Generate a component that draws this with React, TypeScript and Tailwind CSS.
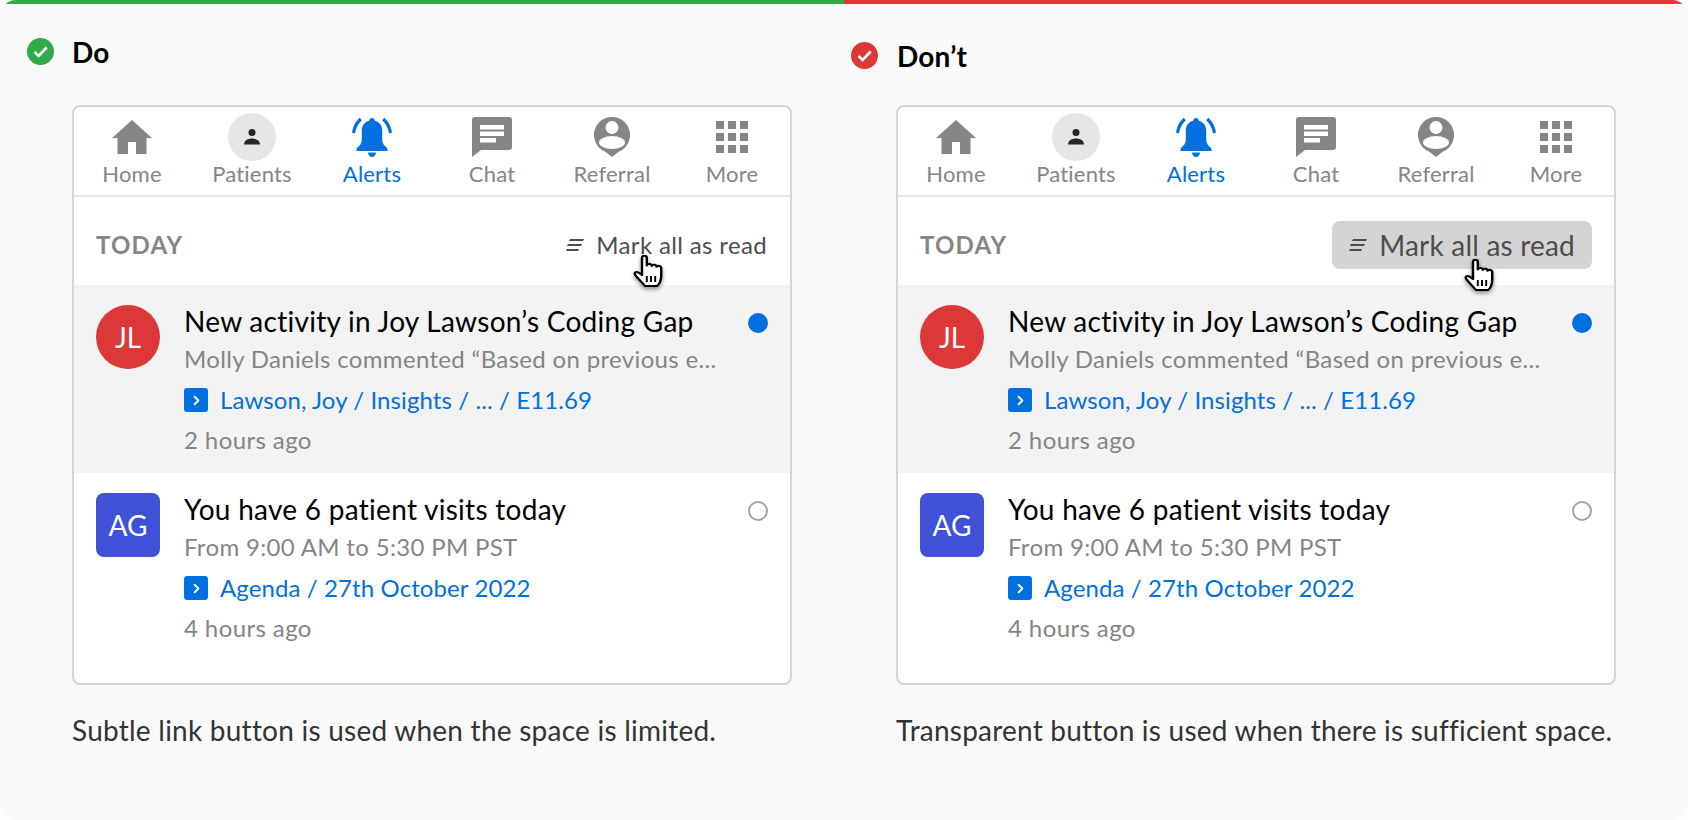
import { ChevronRight } from "lucide-react";

const TABS = ["Home", "Patients", "Alerts", "Chat", "Referral", "More"];

function HomeIcon() {
  return (
    <svg viewBox="0 0 40 34" className="h-[34px] w-[40px] fill-[#858585]">
      <path d="M20 0 40 18h-5.500v16H24V22h-8v12H5.500V18H0z" />
    </svg>
  );
}

function PatientIcon() {
  return (
    <div className="grid h-[48px] w-[48px] place-items-center rounded-full bg-[#e5e5e5]">
      <svg viewBox="0 0 18 18" className="h-[18px] w-[18px] fill-[#262626]">
        <circle cx="9" cy="4.500" r="3.500" />
        <path d="M1 16.500c0-4 3.800-6 8-6s8 2 8 6z" />
      </svg>
    </div>
  );
}

function BellIcon() {
  return (
    <svg viewBox="0 0 40 40" className="h-[40px] w-[40px] fill-[#0070e0]">
      <path d="M20 1c1.600 0 2.800 1.200 2.800 2.800 4.800 1.200 7.400 5 7.400 10.200v9c0 3.600 2.400 6 5.300 8.500V34h-31v-2.500c2.900-2.500 5.300-4.900 5.300-8.500v-9c0-5.200 2.600-9 7.400-10.200C17.200 2.200 18.400 1 20 1z" />
      <path d="M15.800 35.500h8.400c-.5 2.500-2.200 4.500-4.200 4.500s-3.700-2-4.200-4.500z" />
      <path d="M1.600 16C2.200 10.500 4.700 5.800 8.700 2" fill="none" stroke="#0070e0" strokeWidth="3.200" />
      <path d="M38.400 16C37.800 10.500 35.300 5.800 31.300 2" fill="none" stroke="#0070e0" strokeWidth="3.200" />
    </svg>
  );
}

function ChatIcon() {
  return (
    <svg viewBox="0 0 40 40" className="h-[40px] w-[40px]">
      <path className="fill-[#858585]" d="M3 0h34a3 3 0 0 1 3 3v27a3 3 0 0 1-3 3H9l-9 7V3a3 3 0 0 1 3-3z" />
      <path className="fill-white" d="M8 8h24v4.500H8zM8 14.500h24V19H8zM8 21h16v4.500H8z" />
    </svg>
  );
}

function ReferralIcon() {
  return (
    <svg viewBox="0 0 36 40" className="h-[40px] w-[36px]">
      <path className="fill-[#858585]" d="M18 0a18 18 0 0 1 7 34.600L18 40l-7-5.400A18 18 0 0 1 18 0z" />
      <circle className="fill-white" cx="18" cy="10.500" r="6.500" />
      <ellipse className="fill-white" cx="18" cy="25.500" rx="13" ry="6.500" />
    </svg>
  );
}

function MoreIcon() {
  const cells = [0, 12, 24].flatMap((y) => [0, 12, 24].map((x) => ({ x, y })));
  return (
    <svg viewBox="0 0 32 32" className="h-[32px] w-[32px] fill-[#858585]">
      {cells.map((c) => (
        <rect key={`${c.x}-${c.y}`} x={c.x} y={c.y} width="8" height="8" />
      ))}
    </svg>
  );
}

const ICONS: Record<string, () => React.JSX.Element> = {
  Home: HomeIcon,
  Patients: PatientIcon,
  Alerts: BellIcon,
  Chat: ChatIcon,
  Referral: ReferralIcon,
  More: MoreIcon,
};

function Check({ red }: { red?: boolean }) {
  return (
    <svg viewBox="0 0 27 27" className="h-[27px] w-[27px]">
      <circle cx="13.500" cy="13.500" r="13.500" className={red ? "fill-[#dc3838]" : "fill-[#2fab47]"} />
      <path d="M7.500 14l4.200 4 8-8.500" fill="none" stroke="#fff" strokeWidth="2.600" />
    </svg>
  );
}

function MarkIcon() {
  return (
    <svg viewBox="0 0 18 12" className="h-[12px] w-[18px]">
      <path d="M4 0h14l-1 2H3zM2 5h14l-1 2H1zM1 10h12l-1 2H0z" className="fill-[#4d4d4d]" />
    </svg>
  );
}

function Hand({ className }: { className: string }) {
  return (
    <svg
      viewBox="0 0 25 33"
      preserveAspectRatio="none"
      className={`absolute h-[33px] w-[30px] drop-shadow-[0_2px_2px_rgba(0,0,0,0.45)] ${className}`}
    >
      <path
        d="M7.500 3c0-3 4-3 4 0v7.500c.5-2 4-2 4.200.5.500-1.800 3.800-1.500 4 .8.600-1.500 3.800-1.200 3.800 1.200v8c0 5-2 9-3.500 10H10c-1.500-2-3-4-6-8-1.500-2-3-3.500-2.500-5 .8-1.800 3-1 6 2z"
        fill="#fff"
        stroke="#000"
        strokeWidth="2"
        strokeLinejoin="round"
      />
      <path d="M11.500 21v6M15 21v6M18.500 21v6" stroke="#000" strokeWidth="1.600" />
    </svg>
  );
}

function NavLink({ text }: { text: string }) {
  return (
    <div className="mt-[10px] flex h-[32px] items-center gap-[12px] text-[24px] tracking-[0.1px] text-[#0070e0]">
      <span className="grid h-[24px] w-[24px] place-items-center rounded-[3px] bg-[#0070e0]">
        <ChevronRight className="h-[15px] w-[15px] text-white" strokeWidth={3} />
      </span>
      {text}
    </div>
  );
}

function Notification({
  avatar,
  title,
  body,
  link,
  time,
  unread,
}: {
  avatar: React.ReactNode;
  title: string;
  body: string;
  link: string;
  time: string;
  unread?: boolean;
}) {
  return (
    <div className={`flex h-[188px] px-[22px] pt-[20px] ${unread ? "bg-[#f3f3f3]" : ""}`}>
      {avatar}
      <div className="ml-[24px] flex-1">
        <div className="h-[32px] text-[28px] leading-[32px] tracking-[0.28px] text-black">{title}</div>
        <div className="mt-[7px] h-[30px] text-[24px] leading-[30px] tracking-[0.33px] text-[#858585]">{body}</div>
        <NavLink text={link} />
        <div className="mt-[9px] h-[30px] text-[24px] leading-[30px] tracking-[0.4px] text-[#858585]">{time}</div>
      </div>
      {unread ? (
        <span className="mt-[8px] h-[20px] w-[20px] rounded-full bg-[#0070e0]" />
      ) : (
        <span className="mt-[8px] h-[20px] w-[20px] rounded-full border-2 border-[#a3a3a3]" />
      )}
    </div>
  );
}

function Card({ filled }: { filled?: boolean }) {
  return (
    <div className="relative h-[580px] w-[720px] rounded-[8px] border-2 border-[#d4d4d4] bg-white">
      <div className="flex h-[90px] border-b-2 border-[#e5e5e5]">
        <div className="-mx-[2px] flex flex-1">
          {TABS.map((t) => {
            const Icon = ICONS[t];
            return (
              <div key={t} className="flex flex-1 flex-col items-center pt-[6px]">
                <div className="flex h-[48px] items-center justify-center">
                  <Icon />
                </div>
                <div className={`text-[22px] leading-[26px] tracking-[0.2px] ${t === "Alerts" ? "text-[#0070e0]" : "text-[#858585]"}`}>{t}</div>
              </div>
            );
          })}
        </div>
      </div>
      <div className="flex h-[88px] items-center justify-between pl-[22px] pr-[23px] pt-[8px]">
        <span className="text-[24px] font-bold tracking-[1.2px] text-[#858585]">TODAY</span>
        {filled ? (
          <span className="-mr-[1px] flex h-[48px] items-center gap-[12px] rounded-[8px] bg-[#d4d4d4] pl-[17px] pr-[17px] text-[28px] tracking-[0.2px] text-[#4d4d4d]">
            <MarkIcon />
            Mark all as read
          </span>
        ) : (
          <span className="flex items-center gap-[12px] text-[24px] tracking-[0.35px] text-[#4d4d4d]">
            <MarkIcon />
            Mark all as read
          </span>
        )}
      </div>
      <Notification
        unread
        avatar={<div className="grid h-[64px] w-[64px] shrink-0 place-items-center rounded-full bg-[#dc3838] text-[28px] text-white">JL</div>}
        title="New activity in Joy Lawson’s Coding Gap"
        body="Molly Daniels commented “Based on previous e..."
        link="Lawson, Joy / Insights / ... / E11.69"
        time="2 hours ago"
      />
      <Notification
        avatar={<div className="grid h-[64px] w-[64px] shrink-0 place-items-center rounded-[8px] bg-[#3f51d6] text-[28px] text-white">AG</div>}
        title="You have 6 patient visits today"
        body="From 9:00 AM to 5:30 PM PST"
        link="Agenda / 27th October 2022"
        time="4 hours ago"
      />
      <Hand className={filled ? "left-[566px] top-[152px]" : "left-[559px] top-[148px]"} />
    </div>
  );
}

export default function App() {
  return (
    <div className="h-[820px] w-[1688px] overflow-hidden bg-white font-['Lato','Liberation_Sans',sans-serif]">
      <div className="relative h-full overflow-hidden rounded-[16px] bg-[#fafafa]">
        <div className="flex h-[4px]">
          <div className="w-[844px] bg-[#2fab47]" />
          <div className="flex-1 bg-[#dc3838]" />
        </div>
        <div className="flex">
          <section className="w-[844px]">
            <div className="flex h-[101px] items-start pl-[27px] pt-[34px]">
              <Check />
              <h2 className="ml-[18px] text-[28px] font-bold leading-[28px] tracking-[0.2px] text-black">Do</h2>
            </div>
            <div className="pl-[72px]">
              <Card />
              <p className="mt-[28px] text-[28px] leading-[34px] tracking-[0.24px] text-[#333]">Subtle link button is used when the space is limited.</p>
            </div>
          </section>
          <section className="flex-1">
            <div className="flex h-[101px] items-start pl-[7px] pt-[38px]">
              <Check red />
              <h2 className="ml-[19px] text-[28px] font-bold leading-[28px] tracking-[0.2px] text-black">Don’t</h2>
            </div>
            <div className="pl-[52px]">
              <Card filled />
              <p className="mt-[28px] whitespace-nowrap text-[28px] leading-[34px] tracking-[0.22px] text-[#333]">Transparent button is used when there is sufficient space.</p>
            </div>
          </section>
        </div>
      </div>
    </div>
  );
}
